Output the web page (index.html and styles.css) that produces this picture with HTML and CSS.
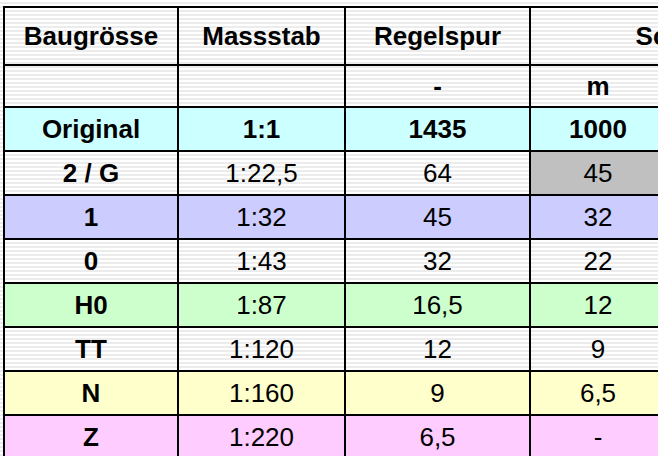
FILE: index.html
```html
<!DOCTYPE html>
<html>
<head>
<meta charset="utf-8">
<link rel="stylesheet" href="styles.css">
</head>
<body>
<table class="grid">
  <colgroup>
    <col class="c1"><col class="c2"><col class="c3"><col class="c4"><col class="c5">
  </colgroup>
  <tr class="head">
    <td class="b">Baugrösse</td>
    <td class="b">Massstab</td>
    <td class="b">Regelspur</td>
    <td class="b" colspan="2">Schmalspur</td>
  </tr>
  <tr class="units">
    <td></td>
    <td></td>
    <td class="b">-</td>
    <td class="b">m</td>
    <td></td>
  </tr>
  <tr class="row cyan b">
    <td>Original</td><td>1:1</td><td>1435</td><td>1000</td><td></td>
  </tr>
  <tr class="row">
    <td class="b">2 / G</td><td>1:22,5</td><td>64</td><td class="gray">45</td><td></td>
  </tr>
  <tr class="row blue">
    <td class="b">1</td><td>1:32</td><td>45</td><td>32</td><td></td>
  </tr>
  <tr class="row">
    <td class="b">0</td><td>1:43</td><td>32</td><td>22</td><td></td>
  </tr>
  <tr class="row green">
    <td class="b">H0</td><td>1:87</td><td>16,5</td><td>12</td><td></td>
  </tr>
  <tr class="row">
    <td class="b">TT</td><td>1:120</td><td>12</td><td>9</td><td></td>
  </tr>
  <tr class="row yellow">
    <td class="b">N</td><td>1:160</td><td>9</td><td>6,5</td><td></td>
  </tr>
  <tr class="row pink">
    <td class="b">Z</td><td>1:220</td><td>6,5</td><td>-</td><td></td>
  </tr>
</table>
</body>
</html>
```
FILE: styles.css
```css
html {
  overflow: hidden;
}
body {
  margin: 0;
  padding: 6px 0 0 3px;
  width: 1200px;
  min-height: 456px;
  font-family: "Liberation Sans", Arial, sans-serif;
  color: #000;
  background: repeating-linear-gradient(to bottom, #ffffff 0, #ffffff 2px, #ececec 2px, #ececec 4px);
}
.grid {
  border-collapse: separate;
  border-spacing: 0;
  table-layout: fixed;
  width: 888px;
  border-left: 2px solid #000;
  border-top: 2px solid #000;
}
.c1 { width: 174px; }
.c2 { width: 167px; }
.c3 { width: 185px; }
.c4 { width: 136px; }
.c5 { width: 224px; }
.grid td {
  box-sizing: border-box;
  border-right: 2px solid #000;
  border-bottom: 2px solid #000;
  text-align: center;
  vertical-align: middle;
  padding: 0;
  font-size: 26px;
  white-space: nowrap;
  overflow: hidden;
}
.b, .b td {
  font-weight: bold;
}
.head td {
  height: 58px;
}
.units td {
  height: 42px;
}
.row td {
  height: 44px;
}
.cyan td { background: #ccffff; }
.blue td { background: #ccccff; }
.green td { background: #ccffcc; }
.yellow td { background: #ffffcc; }
.pink td { background: #ffccff; }
.grid td.gray { background: #c0c0c0; }
```
